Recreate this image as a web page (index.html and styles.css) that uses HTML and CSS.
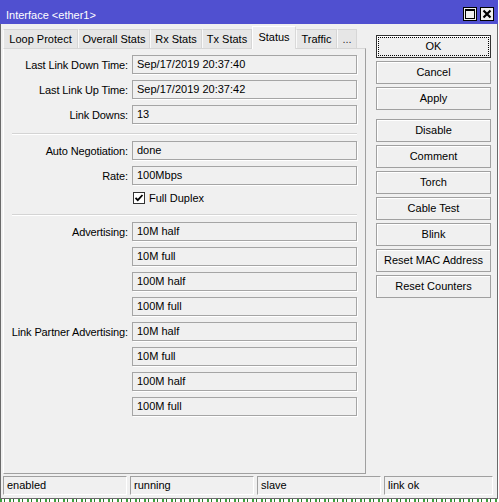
FILE: index.html
```html
<!DOCTYPE html>
<html>
<head>
<meta charset="utf-8">
<title>Interface &lt;ether1&gt;</title>
<link rel="stylesheet" href="styles.css">
</head>
<body>
<div class="window">
  <div class="titlebar">
    <span class="title">Interface &lt;ether1&gt;</span>
    <div class="title-btns">
      <span class="tbtn"><svg width="12" height="12" viewBox="0 0 12 12"><rect x="1.5" y="1.5" width="9" height="9" fill="none" stroke="#000" stroke-width="1"/><rect x="1" y="1" width="10" height="2" fill="#000"/></svg></span>
      <span class="tbtn"><svg width="12" height="12" viewBox="0 0 12 12"><path d="M2.5 2.5 L9.5 9.5 M9.5 2.5 L2.5 9.5" stroke="#000" stroke-width="2.2" fill="none"/></svg></span>
    </div>
  </div>
  <div class="body">
    <div class="main">
      <div class="tabs">
        <div class="tab t1">Loop Protect</div>
        <div class="tab t2">Overall Stats</div>
        <div class="tab t3">Rx Stats</div>
        <div class="tab t4">Tx Stats</div>
        <div class="tab t5 active">Status</div>
        <div class="tab t6">Traffic</div>
        <div class="tab t7">...</div>
      </div>
      <div class="panel">
        <div class="group">
          <div class="row"><span class="label">Last Link Down Time:</span><span class="field">Sep/17/2019 20:37:40</span></div>
          <div class="row"><span class="label">Last Link Up Time:</span><span class="field">Sep/17/2019 20:37:42</span></div>
          <div class="row"><span class="label">Link Downs:</span><span class="field">13</span></div>
        </div>
        <div class="sep"></div>
        <div class="group">
          <div class="row"><span class="label">Auto Negotiation:</span><span class="field">done</span></div>
          <div class="row"><span class="label">Rate:</span><span class="field">100Mbps</span></div>
          <div class="check-row">
            <span class="checkbox"><svg width="10" height="10" viewBox="0 0 10 10"><path d="M1.5 4.8 L3.8 7.2 L8.5 2" stroke="#000" stroke-width="1.8" fill="none"/></svg></span>
            <span class="check-label">Full Duplex</span>
          </div>
        </div>
        <div class="sep"></div>
        <div class="group">
          <div class="row"><span class="label">Advertising:</span><span class="field">10M half</span></div>
          <div class="row"><span class="label"></span><span class="field">10M full</span></div>
          <div class="row"><span class="label"></span><span class="field">100M half</span></div>
          <div class="row"><span class="label"></span><span class="field">100M full</span></div>
          <div class="row"><span class="label">Link Partner Advertising:</span><span class="field">10M half</span></div>
          <div class="row"><span class="label"></span><span class="field">10M full</span></div>
          <div class="row"><span class="label"></span><span class="field">100M half</span></div>
          <div class="row"><span class="label"></span><span class="field">100M full</span></div>
        </div>
      </div>
    </div>
    <div class="buttons">
      <div class="btn default">OK</div>
      <div class="btn">Cancel</div>
      <div class="btn">Apply</div>
      <div class="btn spaced">Disable</div>
      <div class="btn">Comment</div>
      <div class="btn">Torch</div>
      <div class="btn">Cable Test</div>
      <div class="btn">Blink</div>
      <div class="btn">Reset MAC Address</div>
      <div class="btn">Reset Counters</div>
    </div>
  </div>
  <div class="statusbar">
    <div class="cell">enabled</div>
    <div class="cell">running</div>
    <div class="cell">slave</div>
    <div class="cell">link ok</div>
  </div>
</div>
</body>
</html>
```
FILE: styles.css
```css
* { box-sizing: border-box; }
html, body { margin: 0; padding: 0; }
body {
  width: 499px;
  height: 502px;
  overflow: hidden;
  background: #fff repeating-linear-gradient(90deg, #3f9f3f 0 2px, #fff 2px 4px, #2a7a2a 4px 5px, #fff 5px 9px) bottom left / 100% 3px no-repeat;
  font-family: "Liberation Sans", Arial, sans-serif;
  font-size: 11px;
  color: #000;
}
.window {
  width: 498px;
  height: 499px;
  background: #f0f0f0;
  border: 1px solid #6a6a6a;
  border-top: none;
  display: flex;
  flex-direction: column;
}
.titlebar {
  height: 24px;
  flex: none;
  background: #5050d0;
  color: #fff;
  display: flex;
  justify-content: space-between;
  align-items: flex-start;
  margin: 0 -1px;
  padding: 0 4px 0 6px;
}
.title {
  margin-top: 8px;
  line-height: 14px;
  font-size: 11px;
}
.title-btns {
  display: flex;
  gap: 3px;
  margin-top: 7px;
}
.tbtn {
  width: 14px;
  height: 14px;
  background: #f0f0f0;
  border: 1px solid #000;
  display: flex;
  align-items: center;
  justify-content: center;
}
.body {
  flex: none;
  height: 450px;
  display: flex;
  padding: 2px 0 0 2px;
}
.main {
  width: 363px;
  display: flex;
  flex-direction: column;
}
.tabs {
  height: 22px;
  display: flex;
  align-items: flex-end;
  position: relative;
  z-index: 1;
}
.tab {
  height: 19px;
  line-height: 18px;
  text-align: center;
  background: #e6e6e6;
  border: 1px solid #d6d6d6;
  border-bottom: none;
  border-left-color: #fafafa;
  white-space: nowrap;
}
.tab.active {
  height: 23px;
  margin-bottom: -1px;
  line-height: 20px;
  background: #f0f0f0;
  border-color: #d9d9d9;
  border-left-color: #fff;
  border-top-color: #fff;
}
.t1 { width: 75px; }
.t2 { width: 72px; }
.t3 { width: 52px; }
.t4 { width: 50px; }
.t5 { width: 44px; }
.t6 { width: 41px; }
.t7 { width: 20px; color: #333; }
.panel {
  height: 426px;
  border: 1px solid #a0a0a0;
  border-top-color: #d6d6d6;
  border-left-color: #fff;
  padding: 6px 8px 0 0;
  display: flex;
  flex-direction: column;
}
.group {
  display: flex;
  flex-direction: column;
  gap: 6px;
}
.row {
  display: flex;
  align-items: center;
  height: 19px;
}
.label {
  width: 124px;
  flex: none;
  text-align: right;
  white-space: nowrap;
  margin-right: 4px;
  letter-spacing: -0.12px;
}
.field {
  flex: 1;
  height: 19px;
  line-height: 17px;
  border: 1px solid #a5a5a5;
  box-shadow: 1px 1px 0 #fff;
  padding-left: 4px;
  white-space: nowrap;
}
.sep {
  margin: 9px 0 6px 8px;
  border-top: 1px solid #d4d4d4;
  border-bottom: 1px solid #fff;
}
.check-row {
  display: flex;
  align-items: center;
  height: 14px;
  padding-left: 129px;
}
.checkbox {
  width: 12px;
  height: 12px;
  border: 1px solid #333;
  background: #fff;
  display: flex;
  align-items: center;
  justify-content: center;
  margin-right: 4px;
}
.buttons {
  margin-left: 10px;
  padding-top: 9px;
  width: 115px;
  display: flex;
  flex-direction: column;
  gap: 3px;
}
.btn {
  height: 23px;
  line-height: 21px;
  text-align: center;
  border: 1px solid #a0a0a0;
  box-shadow: inset 1px 1px 0 #fff;
  background: #f0f0f0;
  white-space: nowrap;
}
.btn.default {
  border-color: #333;
  outline: 1px dotted #000;
  outline-offset: -3px;
}
.btn.spaced { margin-top: 6px; }
.statusbar {
  flex: none;
  margin-top: 2px;
  display: grid;
  grid-template-columns: 124px 124px 124px 1fr;
  gap: 3px;
  padding: 0 4px 0 2px;
}
.cell {
  height: 19px;
  line-height: 17px;
  border: 1px solid #fff;
  border-top-color: #a0a0a0;
  border-left-color: #a0a0a0;
  padding-left: 3px;
  white-space: nowrap;
}
```
